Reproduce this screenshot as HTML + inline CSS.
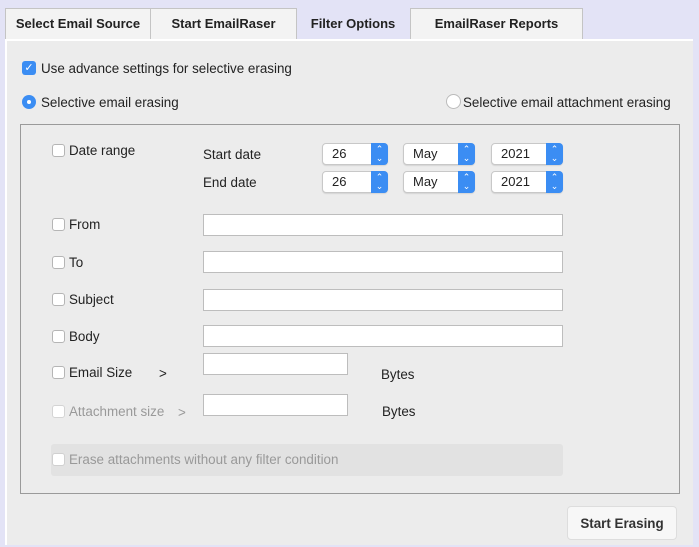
<!DOCTYPE html>
<html><head><style>
body{margin:0;width:699px;height:547px;background:#e3e3f6;font-family:"Liberation Sans",sans-serif;font-size:13.4px;color:#222;position:relative;overflow:hidden}
.a{position:absolute}
.tab{position:absolute;top:8px;height:31px;background:#f3f3f3;border:1px solid #c4c4c4;border-bottom:none;box-sizing:border-box;font-weight:bold;font-size:13px;text-align:center;line-height:30px}
.panel{position:absolute;left:5px;top:39px;width:688px;height:506px;background:#ececec;border-left:2px solid #fff;border-top:2px solid #fff;box-sizing:border-box}
.cb{position:absolute;width:13px;height:13px;border:1px solid #b5b5b5;border-radius:3px;background:#fff;box-sizing:border-box}
.inp{position:absolute;height:22px;background:#fff;border:1px solid #bdbdbd;box-sizing:border-box}
.sel{position:absolute;height:22px;background:#fff;border:1px solid #c8c8c8;border-radius:4px;box-sizing:border-box;font-size:13px;line-height:20px;padding-left:9px;box-shadow:0 1px 1px rgba(0,0,0,.1)}
.sel i{position:absolute;right:-1px;top:-1px;width:17px;height:22px;background:#3b8df3;border-radius:0 4px 4px 0;color:#fff;font-style:normal;font-size:9px;line-height:9px;text-align:center;padding-top:2px;box-sizing:border-box}
.gray{color:#999}
</style></head><body>
<div class="tab" style="left:5px;width:146px">Select Email Source</div>
<div class="tab" style="left:150px;width:147px">Start EmailRaser</div>
<div class="a" style="left:296px;top:16px;width:114px;text-align:center;font-weight:bold;font-size:13px">Filter Options</div>
<div class="tab" style="left:410px;width:173px">EmailRaser Reports</div>
<div class="panel"></div>
<div class="a" style="left:22px;top:61px;width:14px;height:14px;background:#3b8df3;border-radius:3px;color:#fff;font-size:11px;line-height:14px;text-align:center">✓</div>
<div class="a" style="left:41px;top:61px">Use advance settings for selective erasing</div>
<div class="a" style="left:22px;top:95px;width:14px;height:14px;background:#3b8df3;border-radius:50%"><div class="a" style="left:5px;top:5px;width:4px;height:4px;background:#fff;border-radius:50%"></div></div>
<div class="a" style="left:41px;top:95px">Selective email erasing</div>
<div class="a" style="left:446px;top:94px;width:15px;height:15px;background:#fff;border:1px solid #bbb;border-radius:50%;box-sizing:border-box"></div>
<div class="a" style="left:463px;top:95px">Selective email attachment erasing</div>
<div class="a" style="left:20px;top:124px;width:660px;height:370px;border:1px solid #9a9a9a;box-sizing:border-box"></div>

<div class="cb" style="left:52px;top:144px"></div><div class="a" style="left:69px;top:143px">Date range</div>
<div class="a" style="left:203px;top:147px">Start date</div>
<div class="a" style="left:203px;top:175px">End date</div>
<div class="sel" style="left:322px;top:143px;width:66px">26<i>⌃<br>⌄</i></div>
<div class="sel" style="left:403px;top:143px;width:72px">May<i>⌃<br>⌄</i></div>
<div class="sel" style="left:491px;top:143px;width:72px">2021<i>⌃<br>⌄</i></div>
<div class="sel" style="left:322px;top:171px;width:66px">26<i>⌃<br>⌄</i></div>
<div class="sel" style="left:403px;top:171px;width:72px">May<i>⌃<br>⌄</i></div>
<div class="sel" style="left:491px;top:171px;width:72px">2021<i>⌃<br>⌄</i></div>

<div class="cb" style="left:52px;top:218px"></div><div class="a" style="left:69px;top:217px">From</div>
<div class="inp" style="left:203px;top:214px;width:360px"></div>
<div class="cb" style="left:52px;top:256px"></div><div class="a" style="left:69px;top:255px">To</div>
<div class="inp" style="left:203px;top:251px;width:360px"></div>
<div class="cb" style="left:52px;top:293px"></div><div class="a" style="left:69px;top:292px">Subject</div>
<div class="inp" style="left:203px;top:289px;width:360px"></div>
<div class="cb" style="left:52px;top:330px"></div><div class="a" style="left:69px;top:329px">Body</div>
<div class="inp" style="left:203px;top:325px;width:360px"></div>
<div class="cb" style="left:52px;top:366px"></div><div class="a" style="left:69px;top:365px">Email Size</div>
<div class="a" style="left:159px;top:366px">&gt;</div>
<div class="inp" style="left:203px;top:353px;width:145px"></div>
<div class="a" style="left:381px;top:367px">Bytes</div>
<div class="cb" style="left:52px;top:405px;border-color:#d4d4d4"></div><div class="a gray" style="left:69px;top:404px">Attachment size</div>
<div class="a gray" style="left:178px;top:405px">&gt;</div>
<div class="inp" style="left:203px;top:394px;width:145px"></div>
<div class="a" style="left:382px;top:404px">Bytes</div>
<div class="a" style="left:51px;top:444px;width:512px;height:32px;background:#e2e2e2;border-radius:3px"></div>
<div class="cb" style="left:52px;top:453px;border-color:#d0d0d0"></div><div class="a gray" style="left:69px;top:452px">Erase attachments without any filter condition</div>
<div class="a" style="left:567px;top:506px;width:110px;height:34px;background:#f7f7f7;border:1px solid #ddd;border-radius:4px;box-sizing:border-box;font-weight:bold;text-align:center;line-height:33px;color:#333">Start Erasing</div>
</body></html>
